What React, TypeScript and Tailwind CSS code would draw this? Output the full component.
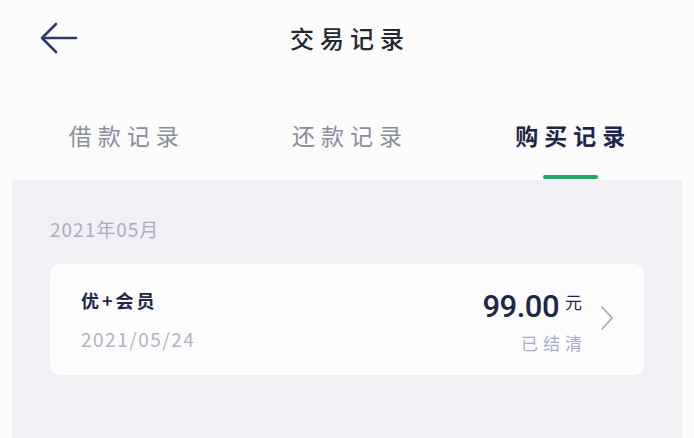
const tabs = [
  { label: '借款记录', active: false },
  { label: '还款记录', active: false },
  { label: '购买记录', active: true },
];

export default function App() {
  return (
    <div
      className="w-[694px] h-[438px] overflow-hidden bg-[#fcfcfd] px-3"
      style={{ fontFamily: '"Noto Sans CJK SC", "Noto Sans", sans-serif' }}
    >
      {/* header */}
      <header className="relative h-[75px] flex items-center justify-center">
        <svg
          className="absolute left-[28px] top-[22px]"
          width="38"
          height="32"
          viewBox="0 0 38 32"
          fill="none"
          stroke="#2f3a6b"
          strokeWidth="2.6"
          strokeLinecap="round"
          strokeLinejoin="round"
        >
          <path d="M36 16H3" />
          <path d="M16 2L2 16l14 14" />
        </svg>
        <h1 className="text-[24px] tracking-[6px] text-[#25272e] font-medium pl-[6px]">交易记录</h1>
      </header>

      {/* tabs */}
      <nav className="grid grid-cols-3 h-[105px]">
        {tabs.map((t) => (
          <div key={t.label} className="relative flex items-start justify-center pt-[43px]">
            <span
              className={
                t.active
                  ? 'text-[23px] tracking-[6px] pl-[6px] font-bold text-[#1f2748]'
                  : 'text-[23px] tracking-[6px] pl-[6px] text-[#8a8e9c]'
              }
            >
              {t.label}
            </span>
            {t.active && (
              <div className="absolute bottom-[1px] w-[55px] h-[4px] rounded-full bg-[#1ea866]" />
            )}
          </div>
        ))}
      </nav>

      {/* list */}
      <main className="bg-[#f1f1f5] h-[258px] px-[38px] pt-[39px]">
        <p className="text-[19px] text-[#a9adc4] leading-none tracking-[1px]">2021年05月</p>
        <div className="mt-[26px] h-[111px] rounded-[10px] bg-[#fdfdfe] flex items-center pl-[31px] pr-[30px]">
          <div className="flex-1 flex flex-col gap-[20px]">
            <span className="text-[18px] font-bold text-[#1f2748] leading-none tracking-[3px]">优+会员</span>
            <span className="text-[19px] text-[#b1b4c6] leading-none tracking-[1.5px]">2021/05/24</span>
          </div>
          <div className="flex flex-col items-end gap-[12px] pt-[2px]">
            <div className="flex items-start leading-none">
              <span
                className="text-[31px] font-medium text-[#1f2748] tracking-[-0.5px]"
                style={{ fontFamily: 'Roboto, "Noto Sans", sans-serif' }}
              >
                99.00
              </span>
              <span className="text-[17px] text-[#1f2748] ml-[6px] mt-[2px]">元</span>
            </div>
            <span className="text-[17px] text-[#a9adc4] leading-none tracking-[5px] -mr-[5px]">已结清</span>
          </div>
          <svg
            className="ml-[18px] mt-[-4px]"
            width="14"
            height="26"
            viewBox="0 0 14 26"
            fill="none"
            stroke="#a2a5b3"
            strokeWidth="1.6"
            strokeLinecap="round"
            strokeLinejoin="round"
          >
            <path d="M2 2l10 11L2 24" />
          </svg>
        </div>
      </main>
    </div>
  );
}
